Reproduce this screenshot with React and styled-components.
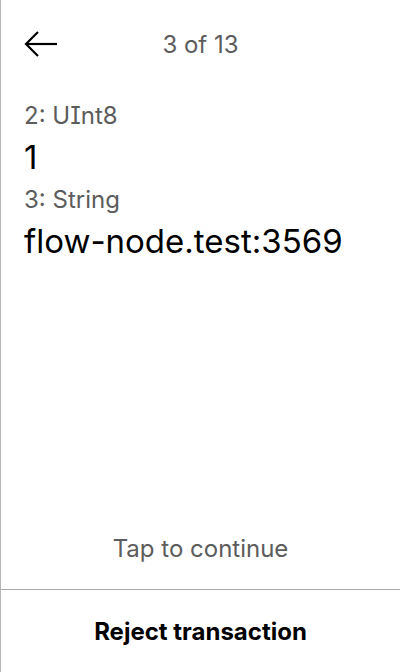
import React from 'react'
import styled, { createGlobalStyle } from 'styled-components'

const Global = createGlobalStyle`
  html, body { margin: 0; padding: 0; background: #fff; }
  body { font-family: Inter, "Noto Sans", sans-serif; }
`

const Screen = styled.div`
  width: 400px;
  height: 672px;
  box-sizing: border-box;
  border-left: 1px solid #b5b5b5;
  display: flex;
  flex-direction: column;
  background: #fff;
`

const Header = styled.div`
  height: 88px;
  display: grid;
  grid-template-columns: 80px 1fr 80px;
  align-items: center;
  padding: 0 23px;
  box-sizing: border-box;
`

const BackButton = styled.button`
  border: 0;
  background: none;
  padding: 0;
  width: 34px;
  height: 28px;
  display: flex;
  align-items: center;
  cursor: pointer;
`

const Counter = styled.div`
  text-align: center;
  font-size: 24px;
  color: #5c5c5c;
`

const Body = styled.div`
  flex: 1;
  display: flex;
  flex-direction: column;
  padding: 12px 23px 0;
`

const Label = styled.div`
  font-size: 24px;
  line-height: 32px;
  color: #5c5c5c;
  font-feature-settings: "cv08";
`

const Value = styled.div`
  font-size: ${p => p.size || 33}px;
  line-height: 50px;
  color: #000;
  margin-bottom: 2px;
`

const Spacer = styled.div`
  flex: 1;
`

const Hint = styled.div`
  text-align: center;
  font-size: 24px;
  line-height: 30px;
  color: #5c5c5c;
  padding-bottom: 25px;
`

const Footer = styled.button`
  height: 83px;
  border: 0;
  border-top: 1px solid #aaa;
  background: none;
  font-family: inherit;
  font-size: 24px;
  font-weight: 700;
  color: #000;
  cursor: pointer;
`

const BackIcon = () => (
  <svg width="34" height="28" viewBox="0 0 34 28" fill="none" stroke="#000" strokeWidth="2.2">
    <path d="M33 14H3" />
    <path d="M14 2L2 14l12 12" />
  </svg>
)

export default function App() {
  return (
    <>
      <Global />
      <Screen>
        <Header>
          <BackButton><BackIcon /></BackButton>
          <Counter>3 of 13</Counter>
          <span />
        </Header>
        <Body>
          <Label>2: UInt8</Label>
          <Value>1</Value>
          <Label>3: String</Label>
          <Value>flow-node.test:3569</Value>
          <Spacer />
          <Hint>Tap to continue</Hint>
        </Body>
        <Footer>Reject transaction</Footer>
      </Screen>
    </>
  )
}
